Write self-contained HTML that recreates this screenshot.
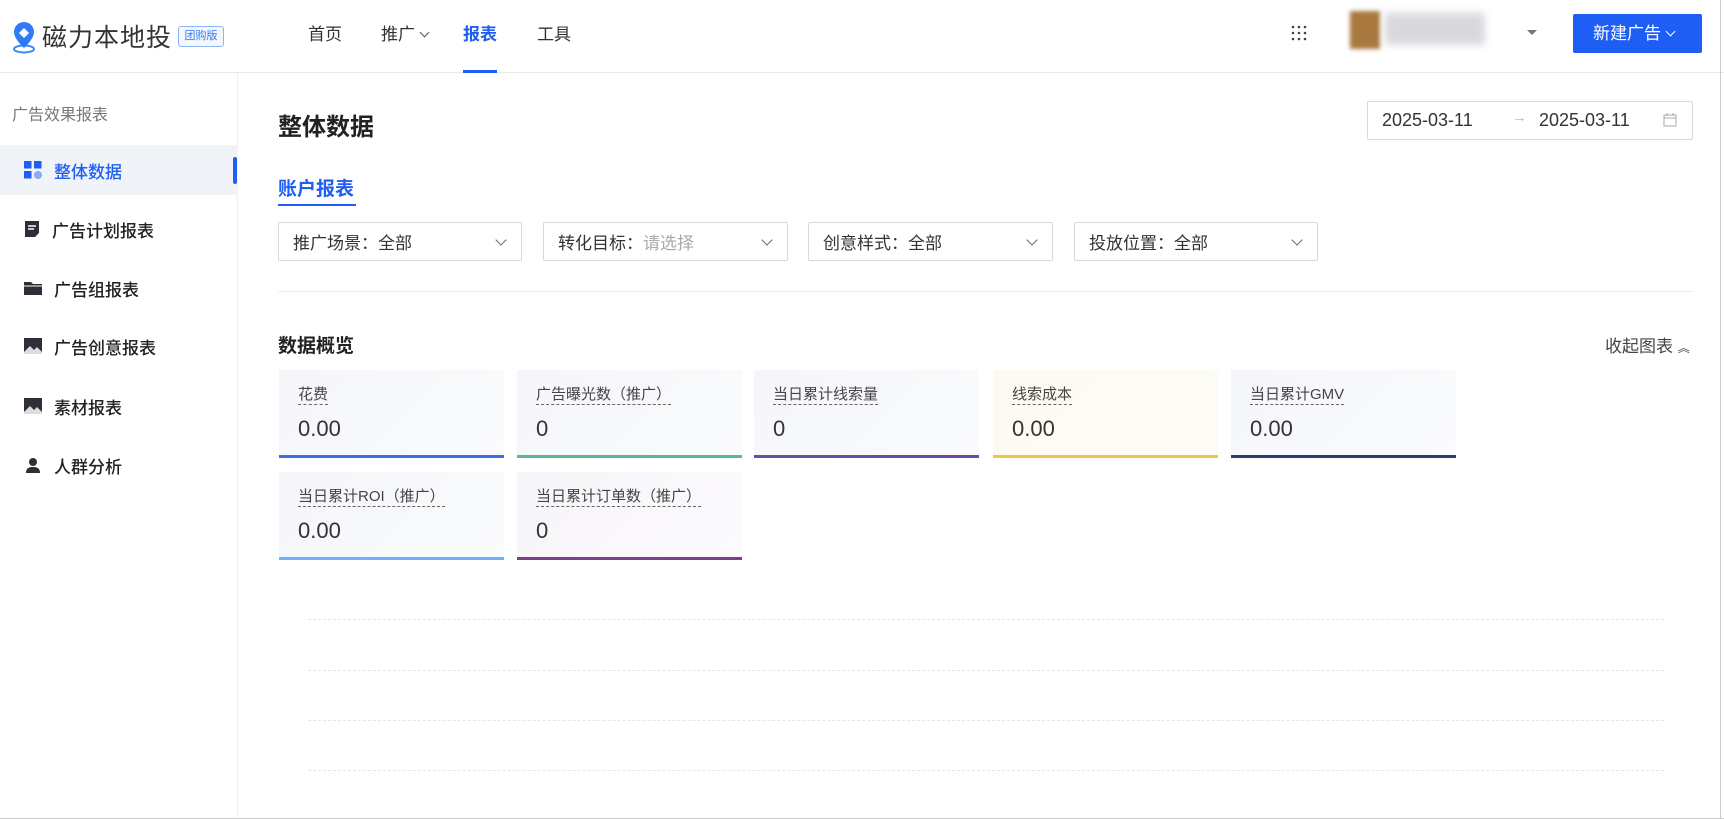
<!DOCTYPE html>
<html><head><meta charset="utf-8"><style>
*{box-sizing:border-box;margin:0;padding:0}
body{width:1724px;height:819px;overflow:hidden;background:#fff;font-family:"Liberation Sans","Noto Sans CJK SC",sans-serif;color:#222;position:relative}
.a{position:absolute}
.hdr{left:0;top:0;width:1724px;height:73px;border-bottom:1px solid #e8e8e8;background:#fff}
.nav{top:20px;font-size:17px;color:#333}
.side{left:0;top:73px;width:238px;height:746px;background:#fff;border-right:1px solid #eceef2}
.si{left:0;width:238px;height:50px;display:flex;align-items:center;padding-left:24px;font-size:17px;color:#222;font-weight:500}
.si svg{margin-right:12px}
.sel{top:222px;height:39px;border:1px solid #d9d9d9;border-radius:2px;font-size:17px;color:#333;padding:0 14px;display:flex;align-items:center}
.sel:after{content:"";position:absolute;right:16px;top:13px;width:7px;height:7px;border-right:1.5px solid #666;border-bottom:1.5px solid #666;transform:rotate(45deg)}
.chev{display:inline-block;width:7px;height:7px;border-right:1.5px solid currentColor;border-bottom:1.5px solid currentColor;transform:rotate(45deg);vertical-align:4px;margin-left:6px}
.card{width:225px;height:88px;background:linear-gradient(135deg,#f4f6fa,#fafbfc)}
.card .l{position:absolute;left:19px;top:15px;font-size:15px;color:#444;border-bottom:1px dashed #666;line-height:19px}
.card .v{position:absolute;left:19px;top:46px;font-size:22px;color:#333}
.card .b{position:absolute;left:0;bottom:0;width:100%;height:3px}
.gl{left:308px;width:1356px;border-top:1px dashed #e6e6e6}
</style></head><body>
<div class="a hdr"></div>
<svg class="a" style="left:11px;top:20px" width="28" height="34" viewBox="0 0 28 34"><ellipse cx="13" cy="29" rx="10" ry="3.5" fill="none" stroke="#3b8bf5" stroke-width="2"/><path d="M13 2a10 10 0 0 1 10 10c0 7-10 16-10 16S3 19 3 12A10 10 0 0 1 13 2z" fill="#2f7bf6"/><path d="M13 8l5 5-5 5-5-5z" fill="#fff"/></svg>
<div class="a" style="left:42px;top:18px;font-size:25px;color:#333;letter-spacing:1px">磁力本地投</div>
<div class="a" style="left:178px;top:26px;width:46px;height:21px;border:1px solid #8fb4f5;border-radius:3px;font-size:11px;color:#3a78f2;text-align:center;line-height:19px;background:#f3f7ff">团购版</div>
<div class="a nav" style="left:308px">首页</div>
<div class="a nav" style="left:381px">推广<span class="chev" style="color:#555"></span></div>
<div class="a nav" style="left:463px;color:#1f5ef5;font-weight:bold">报表</div>
<div class="a" style="left:463px;top:70px;width:34px;height:3px;background:#1f5ef5"></div>
<div class="a nav" style="left:537px">工具</div>
<svg class="a" style="left:1291px;top:25px" width="16" height="16"><g fill="#444"><circle cx="2" cy="2" r="1.3"/><circle cx="8" cy="2" r="1.3"/><circle cx="14" cy="2" r="1.3"/><circle cx="2" cy="8" r="1.3"/><circle cx="8" cy="8" r="1.3"/><circle cx="14" cy="8" r="1.3"/><circle cx="2" cy="14" r="1.3"/><circle cx="8" cy="14" r="1.3"/><circle cx="14" cy="14" r="1.3"/></g></svg>
<div class="a" style="left:1350px;top:11px;width:30px;height:38px;background:#a8783f;filter:blur(2px)"></div>
<div class="a" style="left:1385px;top:13px;width:100px;height:32px;background:#d8d9dc;filter:blur(4px)"></div>
<div class="a" style="left:1527px;top:30px;border-left:5px solid transparent;border-right:5px solid transparent;border-top:5px solid #777"></div>
<div class="a" style="left:1573px;top:14px;width:129px;height:39px;background:#1f5ef5;border-radius:2px;color:#fff;font-size:17px;line-height:39px;padding-left:20px">新建广告<span class="chev"></span></div>

<div class="a side"></div>
<div class="a" style="left:12px;top:101px;font-size:16px;color:#777">广告效果报表</div>
<div class="a" style="left:0;top:145px;width:238px;height:50px;background:#f0f3f8"></div>
<div class="a" style="left:233px;top:157px;width:4px;height:27px;background:#1f5ef5;border-radius:2px"></div>
<div class="a si" style="top:145px;color:#1f5ef5"><svg width="18" height="18"><rect x="0" y="0" width="7.5" height="7.5" fill="#1f5ef5"/><rect x="10" y="0" width="7.5" height="7.5" fill="#1f5ef5"/><rect x="0" y="10" width="7.5" height="7.5" fill="#1f5ef5"/><circle cx="14" cy="14" r="4" fill="#8fa9f5"/></svg>整体数据</div>
<div class="a si" style="top:204px"><svg width="16" height="18"><path d="M1 1h14v12l-4 4H1z" fill="#2c2f36"/><path d="M4 6h8M4 9h6" stroke="#fff" stroke-width="1.5"/></svg>广告计划报表</div>
<div class="a si" style="top:263px"><svg width="18" height="16"><path d="M0 2h7l2 2h9v11H0z" fill="#2c2f36"/><path d="M0 6h18" stroke="#fff" stroke-width="1"/></svg>广告组报表</div>
<div class="a si" style="top:321px"><svg width="18" height="16"><rect width="18" height="16" fill="#2c2f36"/><path d="M0 14l6-6 4 4 3-3 5 5v2H0z" fill="#ddd"/></svg>广告创意报表</div>
<div class="a si" style="top:381px"><svg width="18" height="16"><rect width="18" height="16" fill="#2c2f36"/><path d="M0 14l6-6 4 4 3-3 5 5v2H0z" fill="#ddd"/></svg>素材报表</div>
<div class="a si" style="top:440px"><svg width="18" height="16"><circle cx="9" cy="5" r="4" fill="#2c2f36"/><path d="M2 16c0-5 3-6 7-6s7 1 7 6z" fill="#2c2f36"/></svg>人群分析</div>

<div class="a" style="left:278px;top:107px;font-size:24px;font-weight:bold;color:#222">整体数据</div>
<div class="a" style="left:1367px;top:101px;width:326px;height:39px;border:1px solid #d9d9d9;border-radius:2px"></div>
<div class="a" style="left:1382px;top:110px;font-size:18px;color:#333">2025-03-11</div>
<div class="a" style="left:1512px;top:109px;font-size:15px;color:#bbb">→</div>
<div class="a" style="left:1539px;top:110px;font-size:18px;color:#333">2025-03-11</div>
<svg class="a" style="left:1663px;top:112px" width="14" height="15"><rect x="1" y="3" width="12" height="11" fill="none" stroke="#aaa"/><path d="M1 6h12M4 1v3M10 1v3" stroke="#aaa"/></svg>
<div class="a" style="left:278px;top:174px;font-size:19px;color:#1f5ef5;font-weight:bold">账户报表</div>
<div class="a" style="left:278px;top:204px;width:78px;height:2px;background:#1f5ef5"></div>

<div class="a sel" style="left:278px;width:244px">推广场景：全部</div>
<div class="a sel" style="left:543px;width:245px">转化目标：<span style="color:#aaa">请选择</span></div>
<div class="a sel" style="left:808px;width:245px">创意样式：全部</div>
<div class="a sel" style="left:1074px;width:244px">投放位置：全部</div>
<div class="a" style="left:278px;top:291px;width:1415px;border-top:1px solid #ececec"></div>

<div class="a" style="left:278px;top:331px;font-size:19px;font-weight:bold;color:#222">数据概览</div>
<div class="a" style="left:1605px;top:332px;font-size:17px;color:#444">收起图表 <span style="font-size:12px">︽</span></div>

<div class="a card" style="left:279px;top:370px"><div class="l">花费</div><div class="v">0.00</div><div class="b" style="background:#3a6ff0"></div></div>
<div class="a card" style="left:517px;top:370px"><div class="l">广告曝光数（推广）</div><div class="v">0</div><div class="b" style="background:#5db88f"></div></div>
<div class="a card" style="left:754px;top:370px"><div class="l">当日累计线索量</div><div class="v">0</div><div class="b" style="background:#6a4ca6"></div></div>
<div class="a card" style="left:993px;top:370px;background:linear-gradient(135deg,#fdfaf0,#fdfcf7)"><div class="l">线索成本</div><div class="v">0.00</div><div class="b" style="background:#f2c446"></div></div>
<div class="a card" style="left:1231px;top:370px"><div class="l">当日累计GMV</div><div class="v">0.00</div><div class="b" style="background:#283c78"></div></div>
<div class="a card" style="left:279px;top:472px"><div class="l">当日累计ROI（推广）</div><div class="v">0.00</div><div class="b" style="background:#6cb2fb"></div></div>
<div class="a card" style="left:517px;top:472px;background:linear-gradient(135deg,#f8f5fa,#fbfafc)"><div class="l">当日累计订单数（推广）</div><div class="v">0</div><div class="b" style="background:#7c3f8c"></div></div>

<div class="a gl" style="top:619px"></div>
<div class="a gl" style="top:670px"></div>
<div class="a gl" style="top:720px"></div>
<div class="a gl" style="top:770px"></div>
<div class="a" style="left:1720px;top:0;width:1px;height:819px;background:#ccc"></div>
<div class="a" style="left:0;top:818px;width:1724px;height:1px;background:#ccc"></div>
</body></html>
